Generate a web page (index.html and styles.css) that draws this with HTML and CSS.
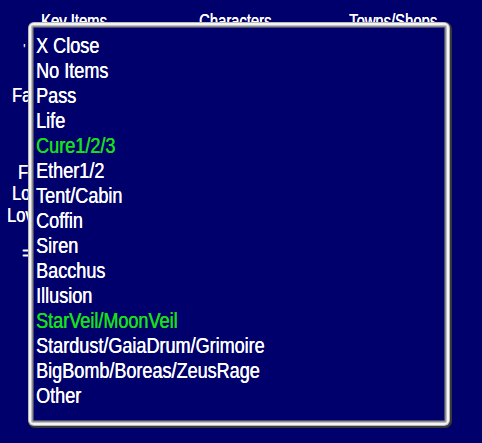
FILE: index.html
```html
<!DOCTYPE html>
<html>
<head>
<meta charset="utf-8">
<link rel="stylesheet" href="styles.css">
</head>
<body>
<div class="screen">
  <div class="tabs">
    <span class="t">Key Items</span>
    <span class="t">Characters</span>
    <span class="t">Towns/Shops</span>
  </div>
  <div class="side">
    <div class="mark">'</div>
    <div class="row r-fa"><span class="t">Fa</span></div>
    <div class="row r-fr"><span class="t">Fr</span></div>
    <div class="row r-lo"><span class="t">Lo</span></div>
    <div class="row r-lov"><span class="t">Lov</span></div>
    <div class="row r-eq"><span class="t">=</span></div>
  </div>
</div>
<div class="popup">
  <ul class="items">
    <li><span class="t">X Close</span></li>
    <li><span class="t">No Items</span></li>
    <li><span class="t">Pass</span></li>
    <li><span class="t">Life</span></li>
    <li class="on"><span class="t">Cure1/2/3</span></li>
    <li><span class="t">Ether1/2</span></li>
    <li><span class="t">Tent/Cabin</span></li>
    <li><span class="t">Coffin</span></li>
    <li><span class="t">Siren</span></li>
    <li><span class="t">Bacchus</span></li>
    <li><span class="t">Illusion</span></li>
    <li class="on"><span class="t">StarVeil/MoonVeil</span></li>
    <li><span class="t">Stardust/GaiaDrum/Grimoire</span></li>
    <li><span class="t">BigBomb/Boreas/ZeusRage</span></li>
    <li><span class="t">Other</span></li>
  </ul>
</div>
</body>
</html>
```
FILE: styles.css
```css
html, body {
  margin: 0;
  padding: 0;
  background: #00006c;
}
body {
  width: 482px;
  height: 443px;
  overflow: hidden;
  position: relative;
  font-family: "Liberation Sans", Arial, sans-serif;
  color: #ffffff;
}
.t {
  display: inline-block;
  white-space: nowrap;
  transform: scaleX(0.82);
  transform-origin: 0 50%;
  text-shadow: 0.4px 0 0 #ffffff;
}
.on .t {
  text-shadow: 0.4px 0 0 #18e018;
}
.screen {
  display: flex;
  flex-direction: column;
}
.tabs {
  display: grid;
  grid-template-columns: 158px 150px auto;
  padding: 9px 0 0 41px;
  font-size: 20px;
  line-height: 24px;
}
.tabs .t {
  transform: scaleX(0.74);
}
.side {
  display: flex;
  flex-direction: column;
  font-size: 20px;
  line-height: 21px;
}
.mark {
  font-size: 14px;
  line-height: 14px;
  padding: 9px 0 0 23px;
}
.r-fa { margin-top: 29px; padding-left: 12px; }
.r-fr { margin-top: 56px; padding-left: 18px; }
.r-lo { margin-top: 0; padding-left: 12px; }
.r-lov { margin-top: 1px; padding-left: 7px; }
.r-eq { margin-top: 17px; padding-left: 22px; }

.popup {
  position: absolute;
  left: 29px;
  top: 23px;
  width: 420px;
  height: 402px;
  box-sizing: border-box;
  background: #00006c;
  border: 2px solid #f4f4f4;
  border-radius: 5px;
  box-shadow:
    0 0 0 1px #b8b8b8,
    1px 1px 0 2px #383838,
    inset 0 0 0 1px #c0c0c0,
    inset 0 0 0 2px #8a8a96,
    inset 0 0 0 3px #4a4a70;
  padding: 8px 0 0 5px;
}
.items {
  list-style: none;
  margin: 0;
  padding: 0;
  font-size: 22px;
  line-height: 25px;
}
.items li {
  white-space: nowrap;
  height: 25px;
}
.items li.on {
  color: #18e018;
}
```
